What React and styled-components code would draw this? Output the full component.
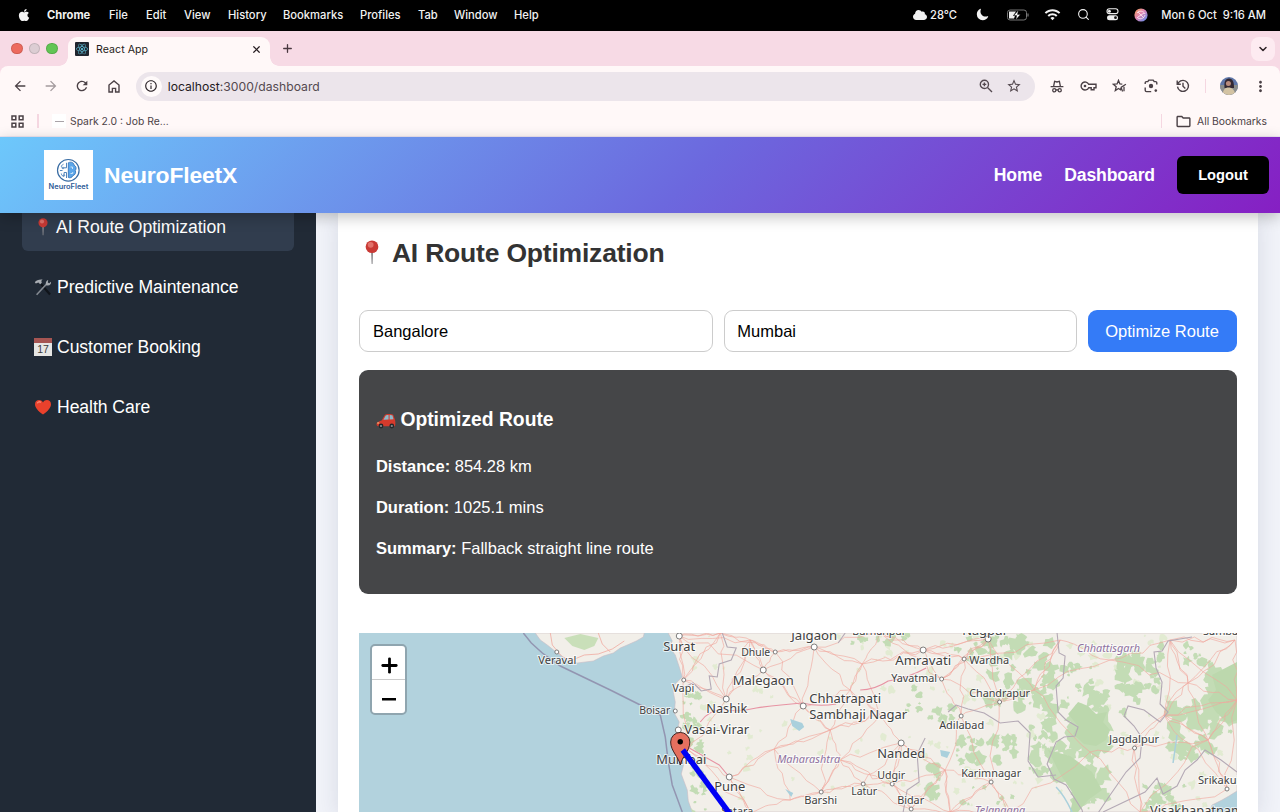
import React from "react";
import styled, { createGlobalStyle } from "styled-components";
import { FaApple, FaReact, FaCloud } from "react-icons/fa";
import { IoMoon } from "react-icons/io5";
import {
  MdArrowBack,
  MdArrowForward,
  MdRefresh,
  MdInfoOutline,
  MdStarBorder,
  MdMoreVert,
  MdOutlineFolder,
  MdWifi,
} from "react-icons/md";
import { Search, X, Plus, ChevronDown } from "lucide-react";

const GlobalStyle = createGlobalStyle`
  * { box-sizing: border-box; }
  body { margin: 0; overflow: hidden; background: #fff8f8; }
`;

const uiFont = `Inter, Roboto, "Liberation Sans", sans-serif`;
const pageFont = `"Liberation Sans", Arial, sans-serif`;

const Screen = styled.div`
  width: 1280px;
  height: 812px;
  overflow: hidden;
  display: flex;
  flex-direction: column;
  font-family: ${uiFont};
`;

/* ---------- system menu bar ---------- */
const MenuBar = styled.div`
  height: 31px;
  flex: none;
  background: #000;
  color: #f2f2f2;
  display: flex;
  align-items: center;
  justify-content: space-between;
  padding: 0 14px 2px 17px;
  font-size: 11.2px;
  font-weight: 500;
`;
const MenuGroup = styled.div`
  display: flex;
  align-items: center;
`;
const MenuItem = styled.span`
  width: ${(p) => p.$w}px;
  font-weight: ${(p) => (p.$bold ? 700 : 500)};
  white-space: nowrap;
`;
const AppleIcon = styled(FaApple)`
  display: block;
`;
const StatusItem = styled.span`
  display: flex;
  align-items: center;
  justify-content: ${(p) => p.$align || "center"};
  width: ${(p) => p.$w}px;
  white-space: pre;
  gap: 3px;
`;

/* ---------- browser chrome ---------- */
const BrowserTop = styled.div`
  flex: none;
  background: #f7dae5;
`;
const TabStrip = styled.div`
  height: 35px;
  display: flex;
  align-items: flex-end;
  padding-left: 11px;
  color: #4a3840;
`;
const Lights = styled.div`
  display: flex;
  gap: 6px;
  width: 57px;
  padding-bottom: 12px;
`;
const Light = styled.span`
  width: 11.5px;
  height: 11.5px;
  border-radius: 50%;
  background: ${(p) => p.$c};
  border: 0.5px solid rgba(0, 0, 0, 0.12);
`;
const Tab = styled.div`
  position: relative;
  width: 202px;
  height: 29px;
  border-radius: 9px 9px 0 0;
  background: #fff8f8;
  display: flex;
  align-items: center;
  padding: 0 8px 5px 7px;
  font-size: 10.6px;
  color: #261c20;
  letter-spacing: 0.05px;
  &::before,
  &::after {
    content: "";
    position: absolute;
    bottom: 0;
    width: 9px;
    height: 9px;
  }
  &::before {
    left: -9px;
    background: radial-gradient(circle at 0 0, transparent 8.5px, #fff8f8 9px);
  }
  &::after {
    right: -9px;
    background: radial-gradient(circle at 100% 0, transparent 8.5px, #fff8f8 9px);
  }
`;
const Favicon = styled.span`
  width: 14px;
  height: 14px;
  background: #20252e;
  color: #61c4de;
  display: grid;
  place-items: center;
  border-radius: 1px;
  margin-right: 7px;
`;
const TabTitle = styled.span`
  flex: 1;
`;
const NewTab = styled.span`
  display: flex;
  padding: 0 0 11px 11px;
  flex: 1;
`;
const TabSearch = styled.span`
  width: 24px;
  height: 24px;
  border-radius: 8px;
  background: #fdebf1;
  display: grid;
  place-items: center;
  margin: 0 5px 5px 0;
  color: #2d2226;
`;
const Toolbar = styled.div`
  height: 40px;
  background: #fff8f8;
  border-radius: 8px 8px 0 0;
  display: flex;
  align-items: center;
  padding: 0 0 0 4px;
  color: #4b4146;
`;
const IconSlot = styled.span`
  width: ${(p) => p.$w || 31.3}px;
  flex: none;
  display: flex;
  justify-content: center;
  align-items: center;
  opacity: ${(p) => (p.$dim ? 0.5 : 1)};
`;
const Omnibox = styled.div`
  width: 899px;
  flex: none;
  height: 29px;
  border-radius: 15px;
  margin-left: 6.5px;
  margin-right: 7px;
  background: #ece5eb;
  display: flex;
  align-items: center;
  padding: 0 7px 0 5px;
  font-size: 12.2px;
  color: #54494f;
  b { font-weight: 400; color: #1f1a1d; }
`;
const SiteInfo = styled.span`
  width: 21px;
  height: 21px;
  border-radius: 50%;
  background: #fffafa;
  color: #2c2428;
  display: grid;
  place-items: center;
  margin-right: 6px;
`;
const Url = styled.span`
  flex: 1;
`;
const Rule = styled.span`
  width: 1.5px;
  height: 14px;
  background: #f5d7e1;
`;
const BookmarkBar = styled.div`
  height: 31px;
  flex: none;
  background: #fff8f8;
  border-bottom: 1px solid #eee6f2;
  display: flex;
  align-items: center;
  padding: 0 13px 0 11px;
  font-size: 10.35px;
  color: #4b4146;
`;
const BookmarkIcon = styled.span`
  width: 14px;
  height: 14px;
  background: #fff;
  display: grid;
  place-items: center;
  margin-right: 4px;
  &::after { content: ""; width: 9px; height: 1px; background: #a9a3a8; }
`;
const Spacer = styled.span`
  flex: 1;
`;
const AllBookmarks = styled.span`
  display: flex;
  align-items: center;
  gap: 5px;
  margin-left: 13px;
`;

/* ---------- application ---------- */
const AppHeader = styled.header`
  height: 76px;
  flex: none;
  position: relative;
  z-index: 2;
  background: linear-gradient(135deg, #6dc8fb 0%, #6c68de 54%, #861fc3 100%);
  box-shadow: 0 4px 14px rgba(0, 0, 0, 0.24);
  color: #fff;
  display: flex;
  align-items: center;
  justify-content: space-between;
  padding: 0 11px 0 44px;
  font-family: ${pageFont};
  font-weight: 700;
`;
const Brand = styled.div`
  display: flex;
  align-items: center;
  gap: 11px;
  font-size: 22.9px;
  letter-spacing: -0.15px;
`;
const Nav = styled.nav`
  display: flex;
  align-items: center;
  gap: 22px;
  font-size: 17.6px;
  letter-spacing: -0.12px;
`;
const LogoutButton = styled.button`
  width: 92px;
  height: 38px;
  border: 0;
  border-radius: 6px;
  background: #000;
  color: #fff;
  padding: 0;
  font: 700 14.7px ${pageFont};
`;
const Body = styled.div`
  flex: 1;
  min-height: 0;
  overflow: hidden;
  display: flex;
  background: #f1f3f9;
  font-family: ${pageFont};
`;
const Sidebar = styled.aside`
  width: 316px;
  flex: none;
  background: #212a36;
  padding: 0 22px;
  display: flex;
  flex-direction: column;
  gap: 12px;
`;
const SideItem = styled.a`
  height: 48px;
  flex: none;
  display: flex;
  align-items: center;
  gap: ${(p) => (p.$active ? 4 : 5)}px;
  padding-left: 12px;
  border-radius: 6px;
  color: #fff;
  font-size: 17.6px;
  letter-spacing: -0.06px;
  background: ${(p) => (p.$active ? "#313d4e" : "transparent")};
  &:first-child { margin-top: -10px; }
`;
const Card = styled.main`
  width: 920px;
  margin-left: 22px;
  background: #fff;
  box-shadow: 0 4px 22px rgba(30, 40, 70, 0.12);
  padding: 24px 21px 0 21.4px;
`;
const Title = styled.h2`
  margin: 0;
  height: 33px;
  display: flex;
  align-items: center;
  gap: 6.5px;
  font-size: 26.5px;
  letter-spacing: -0.2px;
  color: #333;
  svg { margin-bottom: 3px; }
`;
const Form = styled.div`
  margin-top: 40px;
  display: flex;
  gap: 11px;
`;
const Input = styled.input`
  flex: 1;
  min-width: 0;
  height: 42px;
  border: 1px solid #ccc;
  border-radius: 9px;
  background: #fff;
  padding: 0 12.6px;
  font: 16.5px ${pageFont};
  color: #000;
`;
const PrimaryButton = styled.button`
  width: 149px;
  height: 42px;
  border: 0;
  border-radius: 9px;
  background: #347bf7;
  color: #fff;
  padding: 0 1px 0 0;
  font: 16.5px ${pageFont};
`;
const Result = styled.section`
  margin-top: 18px;
  height: 224px;
  border-radius: 9px;
  background: #454648;
  color: #fff;
  padding: 39px 16.5px 0;
  font-size: 16.5px;
`;
const ResultTitle = styled.h3`
  margin: 0 0 16.5px;
  height: 22px;
  display: flex;
  align-items: center;
  gap: 4.5px;
  font-size: 19.3px;
`;
const ResultLine = styled.p`
  margin: 0;
  height: 41.3px;
  line-height: 36px;
`;
const MapBox = styled.div`
  position: relative;
  margin-top: 39px;
  height: 179px;
  overflow: hidden;
  background: #b2d2dd;
  & > svg { display: block; width: 100%; height: 179px; }
`;
const ZoomControl = styled.div`
  position: absolute;
  left: 11px;
  top: 11px;
  width: 37px;
  height: 71px;
  border: 2px solid #8fa5af;
  border-radius: 5px;
  background: #fff;
  display: flex;
  flex-direction: column;
`;
const ZoomButton = styled.button`
  flex: 1;
  border: 0;
  border-bottom: ${(p) => (p.$first ? "1px solid #ccc" : "0")};
  background: none;
  padding: 5px 0 0 1px;
  display: flex;
  align-items: center;
  justify-content: center;
`;

/* ---------- drawings ---------- */
const PinEmoji = ({ w, h }) => (
  <svg width={w} height={h} viewBox="0 0 20 26">
    <path d="M9 12h2.2l-.6 13h-1z" fill="#8e8d90" />
    <circle cx="10" cy="7" r="6.6" fill="#c93a35" />
    <circle cx="8.6" cy="5" r="3" fill="#e98078" opacity=".8" />
  </svg>
);
const ToolsEmoji = () => (
  <svg width="18" height="18" viewBox="0 0 18 18" fill="none">
    <path d="M7 6 16 16.5" stroke="#10141a" strokeWidth="2.2" />
    <path d="M2.6 16.8 12.4 6.2" stroke="#858a92" strokeWidth="1.6" />
    <path d="M12 7.2c-.8-2.6.5-4.8 2.2-5.2l-.4 2.4 1.4.8 1.8-1.5c.4 2-1 4-3.3 3.8" fill="#a4a9af" />
    <path d="M.8 4.2C2.4 2.2 5 1.2 8.8 1.6 7.4 2.2 7 3 7.8 4.8L6.2 6.2 4.4 4.4 1.8 5.4z" fill="#a9adb3" />
  </svg>
);
const CalendarGlyph = styled.span`
  width: 18px;
  height: 18px;
  background: #e6e6e4;
  border-top: 5px solid #a65552;
  color: #3c3c3c;
  font-size: 10.5px;
  line-height: 13px;
  text-align: center;
`;
const HeartEmoji = () => (
  <svg width="18" height="18" viewBox="0 0 18 18">
    <path d="M9 16.5C4 13 1 9.6 1 6.2 1 1.6 6.8.6 9 4.4 11.2.6 17 1.6 17 6.2c0 3.4-3 6.8-8 10.3z" fill="#e9412c" />
    <path d="M3.4 5.4c.4-1.8 2.4-2 3.4-.9" stroke="#f78a74" strokeWidth="1.4" fill="none" />
  </svg>
);
const CarEmoji = () => (
  <svg width="20" height="18" viewBox="0 0 20 18">
    <path d="M.6 12.4c.4-1.8 3-2.2 5-3L8.8 4c1.2-1.2 6.6-1.4 8.4-.2l1.8 5c.6 2.4.4 4.6 0 6.4H2c-1.2-.4-1.6-1.6-1.4-2.8z" fill="#d63a2c" />
    <path d="M7.4 8.8 9.6 4.8c1-.7 2-.7 3-.7v4.5zm6.2-.3V4c1.4 0 2.3.2 2.9.6l1 3.6z" fill="#8fb8c8" />
    <circle cx="5" cy="15" r="2.4" fill="#25282b" />
    <circle cx="15.8" cy="15" r="2.4" fill="#25282b" />
    <circle cx="5" cy="15" r="1.1" fill="#8b8d8f" />
    <circle cx="15.8" cy="15" r="1.1" fill="#8b8d8f" />
    <path d="M1.2 12h2" stroke="#f6d48a" />
  </svg>
);
const Logo = () => (
  <svg width="49" height="50" viewBox="0 0 49 50">
    <rect width="49" height="50" fill="#fff" />
    <circle cx="24.3" cy="20.3" r="10.8" fill="none" stroke="#3a6da4" strokeWidth="1.2" />
    <path
      d="M24.3 12.8c3-1.6 5.6 0 5.8 2.4 2.2 1 2.6 3.8 1.2 5.2 1 2.4-.4 4.8-2.4 5.2-.8 2.2-3 2.6-4.6 1.8z"
      fill="#5ba6ea"
      stroke="#2b6cb4"
      strokeWidth=".8"
    />
    <g fill="none" stroke="#3f78b4" strokeWidth=".9">
      <path d="M22.5 12.8v5h-2.5M22.5 28v-5.5h-2.4v2M19.5 14.2c-1.8.8-2.4 2-2 3.2M18.5 20.5h-2.6M17.3 23.5c.2 2 1.4 2.8 2.8 2.9" />
      <path d="M26.5 17h2v2M26.5 23.5h2.2v-1.5" stroke="#d8ebfb" />
      <circle cx="19" cy="18" r=".8" />
      <circle cx="20" cy="25.3" r=".7" />
    </g>
    <text x="4.6" y="39.4" textLength="39.8" lengthAdjust="spacingAndGlyphs" fontFamily="Inter, sans-serif" fontWeight="600" fontSize="7.2" letterSpacing="0" fill="#2f5c98">NeuroFleet</text>
  </svg>
);
const BatteryIcon = () => (
  <svg width="22" height="12" viewBox="0 0 22 12">
    <rect x=".5" y="1" width="19" height="10" rx="2.6" fill="none" stroke="#777" />
    <path d="M2 2.5h7L6 6.8h2L7 9.5H2z" fill="#eee" />
    <path d="M11.4 1.2 6.8 6.6h3L8.8 10.8l4.6-5.4h-3z" fill="#fff" stroke="#000" strokeWidth=".4" />
    <path d="M21 4.4v3.2" stroke="#777" strokeWidth="1.2" />
  </svg>
);
const ControlIcon = () => (
  <svg width="13" height="13" viewBox="0 0 13 13">
    <rect x="1" y=".8" width="11" height="4.8" rx="2.4" fill="none" stroke="#eee" strokeWidth="1.1" />
    <circle cx="3.4" cy="3.2" r="1.5" fill="#eee" />
    <rect x="1" y="7.2" width="11" height="5" rx="2.5" fill="#eee" />
    <circle cx="9.5" cy="9.7" r="1.4" fill="#111" />
  </svg>
);
const SiriIcon = () => (
  <svg width="14" height="14" viewBox="0 0 14 14">
    <defs>
      <linearGradient id="siri" x1="0" y1="0" x2="1" y2="1">
        <stop offset="0" stopColor="#f0a052" />
        <stop offset=".45" stopColor="#e386b4" />
        <stop offset="1" stopColor="#4d8df2" />
      </linearGradient>
    </defs>
    <circle cx="7" cy="7" r="6.6" fill="url(#siri)" />
    <path d="M3 5c2-3 7-2 8 1M3 9c2 3 7 2 8-2M4 4l6 6M4 9l6-4" stroke="#fbe3ec" strokeWidth=".9" fill="none" />
  </svg>
);
const HomeIcon = () => (
  <svg width="12" height="13" viewBox="0 0 12 13" fill="none" stroke="currentColor" strokeWidth="1.4">
    <path d="M1 12V5l5-4 5 4v7H7.6V8.4H4.4V12z" />
  </svg>
);
const MagnifierPlusIcon = () => (
  <svg width="14" height="14" viewBox="0 0 14 14" fill="none" stroke="currentColor" strokeWidth="1.4">
    <circle cx="5.4" cy="5.4" r="4.1" />
    <path d="M8.5 8.5 13 13M5.4 3.5v3.8M3.5 5.4h3.8" />
  </svg>
);
const IncognitoIcon = () => (
  <svg width="14" height="13" viewBox="0 0 14 13" fill="none" stroke="currentColor" strokeWidth="1.3">
    <path d="M.6 6.7h12.8M3.6 6.5 4.6 1.4l2.4.6 2.4-.6 1 5.1" />
    <circle cx="4.3" cy="10.3" r="1.6" />
    <circle cx="9.7" cy="10.3" r="1.6" />
    <path d="M5.9 10.1q1.1-.7 2.2 0" />
  </svg>
);
const KeyIcon = () => (
  <svg width="17" height="12" viewBox="0 0 17 12" fill="none" stroke="currentColor" strokeWidth="1.4">
    <path d="M8.7 4.3A4 4 0 1 0 8.7 7.7H11.2V9.8H14V7.7H16V4.3Z" />
    <circle cx="5" cy="6" r="1.3" fill="currentColor" stroke="none" />
  </svg>
);
const StarListIcon = () => (
  <svg width="15" height="14" viewBox="0 0 15 14" fill="none" stroke="currentColor" strokeWidth="1.3">
    <path d="M10.3 5.2 7.9 4.9 6.5 1.4 5.1 4.9 1.3 5.2 4.2 7.7 3.3 11.5 6.5 9.5 8.5 10.8 9.3 8.2 13.9 5.2M9.2 8.8 10.6 12.4M12 7.8V12.2" />
  </svg>
);
const LensIcon = () => (
  <svg width="14" height="14" viewBox="0 0 14 14" fill="none" stroke="currentColor" strokeWidth="1.4">
    <path d="M1.2 5V3.8Q1.2 2.6 2.4 2.6h1.4l1-1.5h4.4l1 1.5h1.4q1.2 0 1.2 1.2V5.6M1.2 8.6v2.6q0 1.4 1.4 1.4h4.6" />
    <circle cx="7" cy="7" r="2.2" fill="currentColor" stroke="none" />
    <circle cx="11.8" cy="11.6" r="1.3" fill="currentColor" stroke="none" />
  </svg>
);
const HistoryIcon = () => (
  <svg width="14" height="14" viewBox="0 0 14 14" fill="none" stroke="currentColor" strokeWidth="1.4">
    <path d="M1.5 7.6A5.5 5.5 0 1 0 2.7 3.4L1.2 5.2M1.2 1.6V5.2H4.8M7 3.8V7.2L9.3 9.5" />
  </svg>
);
const AppsIcon = () => (
  <svg width="13" height="13" viewBox="0 0 13 13" fill="none" stroke="currentColor" strokeWidth="1.5">
    <path d="M1 1h3.8v3.8H1zM8.2 1H12v3.8H8.2zM1 8.2h3.8V12H1zM8.2 8.2H12V12H8.2z" />
  </svg>
);
const Avatar = () => (
  <svg width="18" height="18" viewBox="0 0 18 18">
    <defs><clipPath id="avatar"><circle cx="9" cy="9" r="9" /></clipPath></defs>
    <g clipPath="url(#avatar)">
      <rect width="18" height="18" fill="#5f76a8" />
      <path d="M0 8h18v10H0z" fill="#8b8d8c" />
      <path d="M4.5 11C4 5 5 1.5 9 1.5s5 4 5 9.5z" fill="#332833" />
      <circle cx="8.4" cy="6.6" r="2.5" fill="#b98b7c" />
      <path d="M3 18c-.5-5 2-7.5 5.5-7.5S15 13 15 18z" fill="#d3c3a3" />
    </g>
  </svg>
);

/* ---------- map data and terrain ---------- */
const seeded = (seed) => {
  let s = seed;
  return () => {
    s = (s * 16807) % 2147483647;
    return s / 2147483647;
  };
};

const blob = (rnd, cx, cy, r) => {
  const n = 11;
  const pts = [];
  for (let i = 0; i < n; i += 1) {
    const a = (i / n) * Math.PI * 2;
    const k = r * (0.45 + rnd() * 0.85);
    pts.push(`${(cx + Math.cos(a) * k).toFixed(1)},${(cy + Math.sin(a) * k).toFixed(1)}`);
  }
  return `M${pts.join("L")}Z`;
};

const forestRegions = [
  // x, y, width, height, count, largest radius
  [988, 636, 44, 70, 46, 6],
  [1032, 636, 22, 90, 30, 7],
  [1060, 690, 46, 60, 34, 9],
  [1064, 665, 30, 50, 16, 6],
  [1118, 655, 40, 36, 32, 6],
  [1120, 700, 20, 20, 5, 3],
  [1170, 705, 60, 45, 44, 8],
  [1206, 670, 31, 50, 32, 9],
  [1160, 640, 50, 24, 14, 4],
  [1050, 745, 50, 34, 28, 7],
  [1030, 725, 30, 50, 24, 6],
  [1075, 765, 35, 44, 18, 7],
  [955, 735, 60, 28, 36, 5],
  [930, 705, 24, 16, 10, 4],
  [1140, 785, 45, 26, 22, 5],
  [1165, 745, 30, 14, 12, 5],
  [955, 635, 40, 25, 14, 4],
  [683, 690, 16, 50, 24, 3],
  [690, 740, 16, 72, 34, 3],
  [850, 633, 60, 12, 10, 4],
  [905, 688, 20, 24, 7, 5],
  [929, 762, 10, 40, 12, 5],
  [960, 785, 60, 24, 9, 2],
];

const buildForest = () => {
  const rnd = seeded(4211);
  return forestRegions
    .flatMap(([x, y, w, h, n, r]) =>
      Array.from({ length: n }, () => blob(rnd, x + rnd() * w, y + rnd() * h, 1.3 + rnd() * r)))
    .join("");
};

const buildMeadow = () => {
  const rnd = seeded(918);
  return Array.from({ length: 150 }, () => blob(rnd, 690 + rnd() * 545, 635 + rnd() * 176, 1 + rnd() * 4)).join("");
};

const towns = [
  [679, 636], [775, 652], [763, 670], [726, 699], [803, 706], [814, 647], [923, 650], [774, 749],
  [729, 777], [901, 743], [863, 784], [821, 792], [911, 809], [892, 784], [988, 639], [964, 659],
  [941, 679], [999, 702], [961, 716], [991, 782], [1134, 748], [1227, 789], [1164, 715], [1110, 660],
  [1188, 683], [1208, 740], [1090, 752], [1034, 690], [945, 770], [850, 690], [862, 664], [750, 640],
  [840, 760], [790, 800], [1060, 640], [1170, 640], [683, 680], [688, 750], [880, 715], [830, 730],
  [1140, 812], [1235, 640], [1237, 700], [1010, 812], [950, 812], [750, 812], [880, 633], [720, 633],
];

const road = (rnd, [x1, y1], [x2, y2]) => {
  const n = 6;
  const len = Math.hypot(x2 - x1, y2 - y1);
  let d = `M${x1} ${y1}`;
  for (let i = 1; i < n; i += 1) {
    const t = i / n;
    const j = len * 0.1;
    d += `L${(x1 + (x2 - x1) * t + (rnd() - 0.5) * j).toFixed(1)} ${(y1 + (y2 - y1) * t + (rnd() - 0.5) * j).toFixed(1)}`;
  }
  return `${d}L${x2} ${y2}`;
};

const buildRoads = () => {
  const rnd = seeded(77);
  const out = [];
  towns.forEach((a, i) => {
    towns
      .map((b, j) => ({ j, b, d: Math.hypot(a[0] - b[0], a[1] - b[1]) }))
      .filter((o) => o.j !== i)
      .sort((p, q) => p.d - q.d)
      .slice(0, 5)
      .forEach(({ j, b }) => {
        if (j > i || rnd() > 0.6) out.push(road(rnd, a, b));
      });
  });
  return out.join("");
};

const forestPath = buildForest();
const meadowPath = buildMeadow();
const roadPath = buildRoads();

const landPath =
  "M668 633L672 641 669 647 675 655 679 667 682 677 675 684 673 692 675 702 674 713 679 722 677 730 681 738 678 753 684 762 681 774 687 790 688 801 692 812H1209L1212 805 1222 800 1229 796 1237 791V633Z" +
  "M535 633L540 640 547 645 557 653 567 660 577 663 593 661 603 656 613 653 620 648 627 645 636 641 643 637 644 633Z";

const labels = [
  { t: "Surat", x: 663, y: 651, w: 32, s: 12 },
  { t: "Veraval", x: 538, y: 664, w: 38, s: 10.5 },
  { t: "Jalgaon", x: 791, y: 640, w: 46, s: 12 },
  { t: "Burhanpur", x: 852, y: 635, w: 54, s: 10.5 },
  { t: "Dhule", x: 741, y: 656, w: 29, s: 10.5 },
  { t: "Malegaon", x: 732.5, y: 685.5, w: 61, s: 12 },
  { t: "Vapi", x: 672, y: 692, w: 22, s: 10.5 },
  { t: "Boisar", x: 639, y: 714, w: 31, s: 10.5 },
  { t: "Nashik", x: 706, y: 713, w: 41, s: 12 },
  { t: "Vasai-Virar", x: 684, y: 734, w: 65, s: 12 },
  { t: "Mumbai", x: 656, y: 764, w: 50, s: 12 },
  { t: "Pune", x: 714, y: 791, w: 31, s: 12 },
  { t: "Satara", x: 721, y: 815, w: 32, s: 10.5 },
  { t: "Chhatrapati", x: 809, y: 702.5, w: 72, s: 12 },
  { t: "Sambhaji Nagar", x: 809, y: 719, w: 98, s: 12 },
  { t: "Amravati", x: 895, y: 665, w: 56, s: 12 },
  { t: "Wardha", x: 969, y: 664, w: 40, s: 10.5 },
  { t: "Yavatmal", x: 891, y: 682.5, w: 46, s: 10.5 },
  { t: "Nagpur", x: 962, y: 635, w: 46, s: 12 },
  { t: "Chandrapur", x: 969, y: 697.5, w: 61, s: 10.5 },
  { t: "Adilabad", x: 939, y: 729, w: 45, s: 10.5 },
  { t: "Nanded", x: 877, y: 758.5, w: 48, s: 12 },
  { t: "Udgir", x: 877, y: 779.5, w: 28, s: 10.5 },
  { t: "Latur", x: 851, y: 795, w: 26, s: 10.5 },
  { t: "Barshi", x: 804, y: 804, w: 33, s: 10.5 },
  { t: "Bidar", x: 897, y: 804, w: 27, s: 10.5 },
  { t: "Karimnagar", x: 961, y: 777, w: 60, s: 10.5 },
  { t: "Jagdalpur", x: 1109, y: 743, w: 50, s: 10.5 },
  { t: "Srikakulam", x: 1198, y: 784.5, w: 58, s: 10.5 },
  { t: "Sambalpur", x: 1203, y: 635, w: 56, s: 10.5 },
  { t: "Visakhapatnam", x: 1150, y: 815, w: 93, s: 12.3 },
  { t: "Maharashtra", x: 777, y: 763.5, w: 63, s: 10.5, region: true },
  { t: "Chhattisgarh", x: 1077, y: 652, w: 63, s: 10.5, region: true },
  { t: "Telangana", x: 975, y: 814, w: 50, s: 10.5, region: true },
];

const dots = [
  [679, 636, 3], [814, 647, 3], [775, 652, 2], [763, 670, 3], [683.5, 680, 2], [726, 699, 3], [675, 711, 2],
  [678, 730, 3], [803, 706, 3], [729, 777, 3], [923, 650, 3], [964, 659, 2], [941.5, 679, 2], [988, 639, 3],
  [999.5, 702, 2], [961, 716, 2], [901, 743, 3], [892, 784, 2], [863, 784, 2], [821, 792, 2], [911, 809, 2],
  [991, 782, 2], [1134.5, 748, 2], [1227, 789, 2], [556.5, 652, 2],
];

const RouteMap = () => (
  <svg viewBox="358.6 633 878 179" preserveAspectRatio="none">
    <defs><clipPath id="land"><path d={landPath} /></clipPath></defs>
    <rect x="358" y="633" width="880" height="179" fill="#b2d2dd" />
    <path d={landPath} fill="#f2efe9" stroke="#c9bcc4" strokeWidth=".6" />
    <g clipPath="url(#land)">
      <path d={meadowPath} fill="#e2ebd2" />
      <path d={forestPath} fill="#c3dcb5" />
      <path d="M1078 702L1088 706 1096 714 1107 712 1103 722 1110 730 1106 740 1096 746 1084 744 1073 734 1078 726 1068 714Z" fill="#bcd8ad" />
      <path d="M1212 675L1237 662V720L1228 724 1216 712 1208 700 1216 690Z" fill="#bcd8ad" />
      <path d="M1048 750L1070 756 1092 772 1102 790 1088 800 1078 812H1070L1074 795 1060 774Z" fill="#bcd8ad" />
      <path d="M564 638L580 634 598 638 594 646 584 650 572 646Z" fill="#c9dfb9" />
      <path d={roadPath} fill="none" stroke="#f0a89e" strokeWidth=".75" opacity=".85" />
      <path d="M550 633l2 12 10 12 10 3 12-5 14-1 14-5 12-8M598 633l4 11 8 8" fill="none" stroke="#f0aaa0" strokeWidth=".8" />
      <path d="M700 722q10-14 26-12 14 2 30-2 20-3 46-5 16 4 34 1M860 690q14 0 28-9 20-3 38-13M689 748l30 17 10 12" fill="none" stroke="#e793a3" strokeWidth="1.1" />
      <g fill="none" stroke="#b4a9b5" strokeWidth="1.1">
        <path d="M722 633l5 14 9 1-5 12-12 4-2 13-8-1 2 13-10 2-8-8-9 4" />
        <path d="M1057 633l2 20 6 3-2 22-7 8 2 26 8 8 12 7-3 9-11 1-8 5-9 22 7 15 12 6 16 25 4 20" />
        <path d="M948 712l8-7 12 4 16 4 16 10 18-2 12 12-2 28 10 16 18-2M845 633l-7 10M925 738l-8 16 2 28-12 8-4 22" />
        <path d="M1192 637l-24 4-6 10-8 1 2 16 6 14-2 22 8 8-8 10-16-12-16-4-4 10 10 10 8 12-2 20-14 14-18 26-12 18M1103 812l42-20 12-14 6 16 14-8 8-16 12-10 8-10 16 10 16 12" />
      </g>
      <path d="M790 719l12 4 2 4-5 4-7-5zM940 750l10 2-3 6-6-2zM785 789l8 4-2 4z" fill="#aad0dc" />
      <path d="M1056 787q8 8 16 25M1177 735l-4 28" fill="none" stroke="#aad0dc" strokeWidth="1.5" />
    </g>
    <g fill="none" stroke="#8d8ba9" strokeWidth="1.5" opacity=".85">
      <path d="M523 633L531 643 542 653 560 666 610 690 640 705 660 715 665 737 668 762 672 785 682 812" />
    </g>
    {dots.map(([x, y, r]) => (
      <circle key={`${x}-${y}`} cx={x} cy={y} r={r} fill="#fff" stroke="#6f6f6f" strokeWidth=".9" />
    ))}
    {labels.map((l) => (
      <text
        key={l.t}
        x={l.x}
        y={l.y}
        textLength={l.w}
        lengthAdjust="spacingAndGlyphs"
        fontFamily='"Noto Sans", "Open Sans", sans-serif'
        fontSize={l.s}
        fontStyle={l.region ? "italic" : "normal"}
        fill={l.region ? "#8f72a0" : "#414141"}
        stroke="#fff"
        strokeOpacity=".7"
        strokeWidth="2"
        paintOrder="stroke"
      >
        {l.t}
      </text>
    ))}
    <path d="M680 765C678.5 757 670.4 751 670.4 742A9.6 9.6 0 0 1 689.6 742C689.6 751 681.5 757 680 765Z" fill="#e5705f" stroke="#40201d" strokeWidth="1" />
    <path d="M682.5 750L730.5 815" stroke="#0000f5" strokeWidth="5.5" />
    <circle cx="680" cy="741.7" r="2.7" fill="#000" />
  </svg>
);

const menus = [["File", 37], ["Edit", 38], ["View", 44], ["History", 55], ["Bookmarks", 77], ["Profiles", 58], ["Tab", 36], ["Window", 60], ["Help", 30]];

export default function App() {
  return (
    <Screen>
      <GlobalStyle />
      <MenuBar>
        <MenuGroup>
          <MenuItem $w={30}><AppleIcon size={14} /></MenuItem>
          <MenuItem $w={62} $bold>Chrome</MenuItem>
          {menus.map(([m, w]) => <MenuItem key={m} $w={w}>{m}</MenuItem>)}
        </MenuGroup>
        <MenuGroup>
          <StatusItem $w={44} $align="flex-start"><FaCloud size={14} />28°C</StatusItem>
          <StatusItem $w={50}><IoMoon size={13} /></StatusItem>
          <StatusItem $w={22}><BatteryIcon /></StatusItem>
          <StatusItem $w={46}><MdWifi size={17} /></StatusItem>
          <StatusItem $w={16}><Search size={13} /></StatusItem>
          <StatusItem $w={42}><ControlIcon /></StatusItem>
          <StatusItem $w={15}><SiriIcon /></StatusItem>
          <StatusItem $w={118} $align="flex-end">{"Mon 6 Oct  9:16 AM"}</StatusItem>
        </MenuGroup>
      </MenuBar>

      <BrowserTop>
        <TabStrip>
          <Lights><Light $c="#ed6a5e" /><Light $c="#dccdd3" /><Light $c="#61c554" /></Lights>
          <Tab>
            <Favicon><FaReact size={12} /></Favicon>
            <TabTitle>React App</TabTitle>
            <X size={11} strokeWidth={2.6} />
          </Tab>
          <NewTab><Plus size={13} strokeWidth={2.4} /></NewTab>
          <TabSearch><ChevronDown size={12} strokeWidth={3} /></TabSearch>
        </TabStrip>

        <Toolbar>
          <IconSlot><MdArrowBack size={16} /></IconSlot>
          <IconSlot $dim><MdArrowForward size={16} /></IconSlot>
          <IconSlot><MdRefresh size={16} /></IconSlot>
          <IconSlot><HomeIcon /></IconSlot>
          <Omnibox>
            <SiteInfo><MdInfoOutline size={14} /></SiteInfo>
            <Url><b>localhost</b>:3000/dashboard</Url>
            <IconSlot $w={28}><MagnifierPlusIcon /></IconSlot>
            <IconSlot $w={28}><MdStarBorder size={16} /></IconSlot>
          </Omnibox>
          <IconSlot><IncognitoIcon /></IconSlot>
          <IconSlot><KeyIcon /></IconSlot>
          <IconSlot><StarListIcon /></IconSlot>
          <IconSlot><LensIcon /></IconSlot>
          <IconSlot><HistoryIcon /></IconSlot>
          <IconSlot $w={15}><Rule /></IconSlot>
          <IconSlot><Avatar /></IconSlot>
          <IconSlot><MdMoreVert size={17} /></IconSlot>
        </Toolbar>
      </BrowserTop>

      <BookmarkBar>
        <AppsIcon />
        <IconSlot $w={28}><Rule /></IconSlot>
        <BookmarkIcon />
        Spark 2.0 : Job Re...
        <Spacer />
        <Rule />
        <AllBookmarks><MdOutlineFolder size={17} />All Bookmarks</AllBookmarks>
      </BookmarkBar>

      <AppHeader>
        <Brand><Logo />NeuroFleetX</Brand>
        <Nav>
          <span>Home</span>
          <span>Dashboard</span>
          <LogoutButton>Logout</LogoutButton>
        </Nav>
      </AppHeader>

      <Body>
        <Sidebar>
          <SideItem $active><PinEmoji w={18} h={18} />AI Route Optimization</SideItem>
          <SideItem><ToolsEmoji />Predictive Maintenance</SideItem>
          <SideItem><CalendarGlyph>17</CalendarGlyph>Customer Booking</SideItem>
          <SideItem><HeartEmoji />Health Care</SideItem>
        </Sidebar>
        <Card>
          <Title><PinEmoji w={26} h={25} />AI Route Optimization</Title>
          <Form>
            <Input defaultValue="Bangalore" />
            <Input defaultValue="Mumbai" />
            <PrimaryButton>Optimize Route</PrimaryButton>
          </Form>
          <Result>
            <ResultTitle><CarEmoji />Optimized Route</ResultTitle>
            <ResultLine><b>Distance:</b> 854.28 km</ResultLine>
            <ResultLine><b>Duration:</b> 1025.1 mins</ResultLine>
            <ResultLine><b>Summary:</b> Fallback straight line route</ResultLine>
          </Result>
          <MapBox>
            <RouteMap />
            <ZoomControl>
              <ZoomButton $first><Plus size={23} strokeWidth={2.9} color="#000" /></ZoomButton>
              <ZoomButton><svg width="14" height="3"><rect width="14" height="2.5" /></svg></ZoomButton>
            </ZoomControl>
          </MapBox>
        </Card>
      </Body>
    </Screen>
  );
}
